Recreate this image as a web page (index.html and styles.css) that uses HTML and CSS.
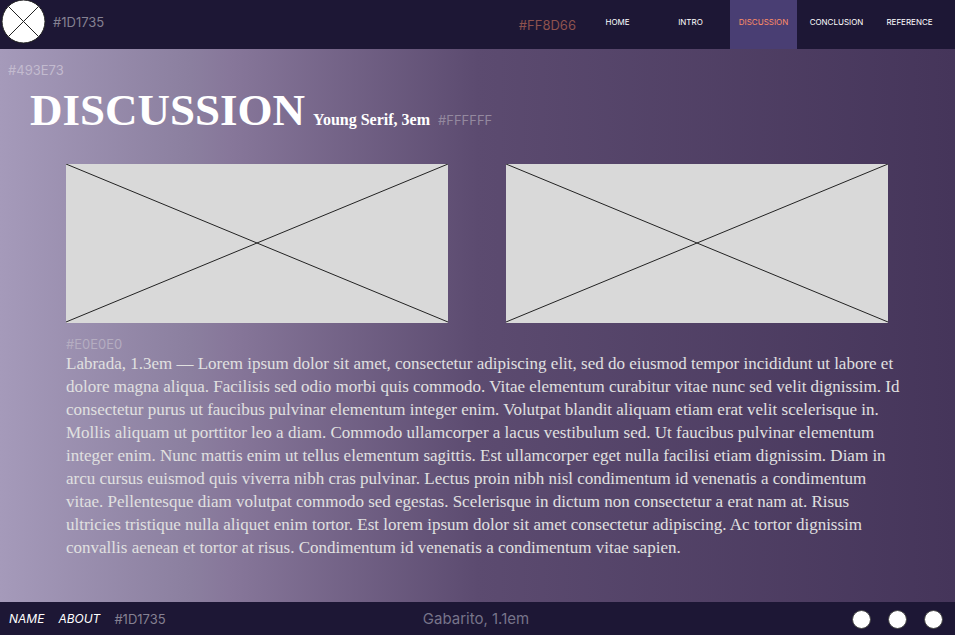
FILE: index.html
```html
<!DOCTYPE html>
<html lang="en">
<head>
<meta charset="utf-8">
<title>Discussion</title>
<link rel="stylesheet" href="styles.css">
</head>
<body>
<header class="top">
  <svg class="logo" viewBox="0 0 43 43" aria-hidden="true">
    <circle cx="21.5" cy="21.5" r="21.5"/>
    <path d="M6.6 6.6L36.4 36.4M36.4 6.6L6.6 36.4"/>
  </svg>
  <span class="note">#1D1735</span>
  <span class="note accent">#FF8D66</span>
  <nav class="nav">
    <a href="#">HOME</a>
    <a href="#">INTRO</a>
    <a href="#" class="active" aria-current="page">DISCUSSION</a>
    <a href="#">CONCLUSION</a>
    <a href="#">REFERENCE</a>
  </nav>
</header>
<main>
  <span class="note pale">#493E73</span>
  <div class="heading">
    <h1>DISCUSSION</h1>
    <span class="sub">Young Serif, 3em</span>
    <span class="note light">#FFFFFF</span>
  </div>
  <div class="gallery">
    <svg class="frame" viewBox="0 0 382 159" preserveAspectRatio="none" aria-hidden="true"><path d="M0 0L382 158M0 158L382 0"/></svg>
    <svg class="frame" viewBox="0 0 382 159" preserveAspectRatio="none" aria-hidden="true"><path d="M0 0L382 158M0 158L382 0"/></svg>
  </div>
  <section class="copy">
    <span class="note gray">#E0E0E0</span>
    <p>Labrada, 1.3em — Lorem ipsum dolor sit amet, consectetur adipiscing elit, sed do eiusmod tempor incididunt ut labore et<br>
    dolore magna aliqua. Facilisis sed odio morbi quis commodo. Vitae elementum curabitur vitae nunc sed velit dignissim. Id<br>
    consectetur purus ut faucibus pulvinar elementum integer enim. Volutpat blandit aliquam etiam erat velit scelerisque in.<br>
    Mollis aliquam ut porttitor leo a diam. Commodo ullamcorper a lacus vestibulum sed. Ut faucibus pulvinar elementum<br>
    integer enim. Nunc mattis enim ut tellus elementum sagittis. Est ullamcorper eget nulla facilisi etiam dignissim. Diam in<br>
    arcu cursus euismod quis viverra nibh cras pulvinar. Lectus proin nibh nisl condimentum id venenatis a condimentum<br>
    vitae. Pellentesque diam volutpat commodo sed egestas. Scelerisque in dictum non consectetur a erat nam at. Risus<br>
    ultricies tristique nulla aliquet enim tortor. Est lorem ipsum dolor sit amet consectetur adipiscing. Ac tortor dignissim<br>
    convallis aenean et tortor at risus. Condimentum id venenatis a condimentum vitae sapien.</p>
  </section>
</main>
<footer class="bottom">
  <div class="links">
    <a href="#">NAME</a>
    <a href="#">ABOUT</a>
    <span class="note">#1D1735</span>
  </div>
  <span class="font-note">Gabarito, 1.1em</span>
  <div class="dots"><i></i><i></i><i></i></div>
</footer>
</body>
</html>
```
FILE: styles.css
```css
* { box-sizing: border-box; }
body {
  margin: 0;
  min-height: 100vh;
  display: flex;
  flex-direction: column;
  font-family: Inter, "Liberation Sans", sans-serif;
  color: #fff;
  background: #1d1735;
}
a { color: inherit; text-decoration: none; }
.note {
  font-size: 13px;
  line-height: 18px;
  color: #858192;
}
.top {
  display: flex;
  align-items: stretch;
  height: 49px;
  padding: 0 12px 0 2px;
}
.top .note { padding-top: 13px; margin-left: 8px; }
.logo { width: 43px; height: 43px; flex: none; overflow: visible; }
.logo circle { fill: #fff; stroke: #222; stroke-width: 1; }
.logo path, .frame path { fill: none; stroke: #222; stroke-width: 1; }
.top .accent { color: #8e524e; margin-left: auto; padding-top: 16px; }
.nav {
  display: grid;
  grid-template-columns: repeat(5, 67px);
  gap: 6px;
  margin-left: 8px;
}
.nav a {
  padding-top: 16px;
  font-size: 8px;
  line-height: 12px;
  text-align: center;
}
.nav .active { background: #493e73; color: #ff8d66; }
main {
  flex: 1;
  display: flex;
  flex-direction: column;
  padding: 12px 0 40px;
  background: linear-gradient(90deg, #a59aba 0%, #8b7f9f 20%, #87779a 24%, #5c4b70 50%, #45355a 100%);
}
main .pale { margin-left: 8px; color: #c3bbcf; }
.heading {
  display: flex;
  align-items: baseline;
  gap: 8px;
  padding-left: 30px;
  margin-top: 5px;
}
h1, .sub, .copy p { font-family: "Liberation Serif", serif; }
h1 { margin: 0; font-size: 45px; line-height: 52px; font-weight: 700; }
.sub { font-size: 16px; font-weight: 700; }
.heading .light { color: #94899f; }
.gallery {
  display: grid;
  grid-template-columns: 1fr 1fr;
  gap: 58px;
  margin-top: 28px;
  padding: 0 67px 0 66px;
}
.frame { display: block; width: 100%; height: 159px; background: #d9d9d9; }
.copy { padding: 12px 0 0 66px; }
.copy .gray { display: block; color: #b5adc1; }
.copy p {
  margin: -1px 0 0;
  font-size: 17px;
  line-height: 23px;
  color: #e0e0e0;
  white-space: nowrap;
}
.bottom {
  display: grid;
  grid-template-columns: 1fr auto 1fr;
  align-items: center;
  height: 33px;
  padding: 1px 12px 0 9px;
}
.links { display: flex; align-items: center; gap: 14px; font-size: 12px; line-height: 18px; }
.links a { font-style: italic; }
.font-note { font-size: 15px; line-height: 18px; color: #77748a; }
.dots { display: flex; justify-content: flex-end; gap: 17px; }
.dots i { width: 19px; height: 19px; border-radius: 50%; background: #fff; border: 1px solid #444; }
```
